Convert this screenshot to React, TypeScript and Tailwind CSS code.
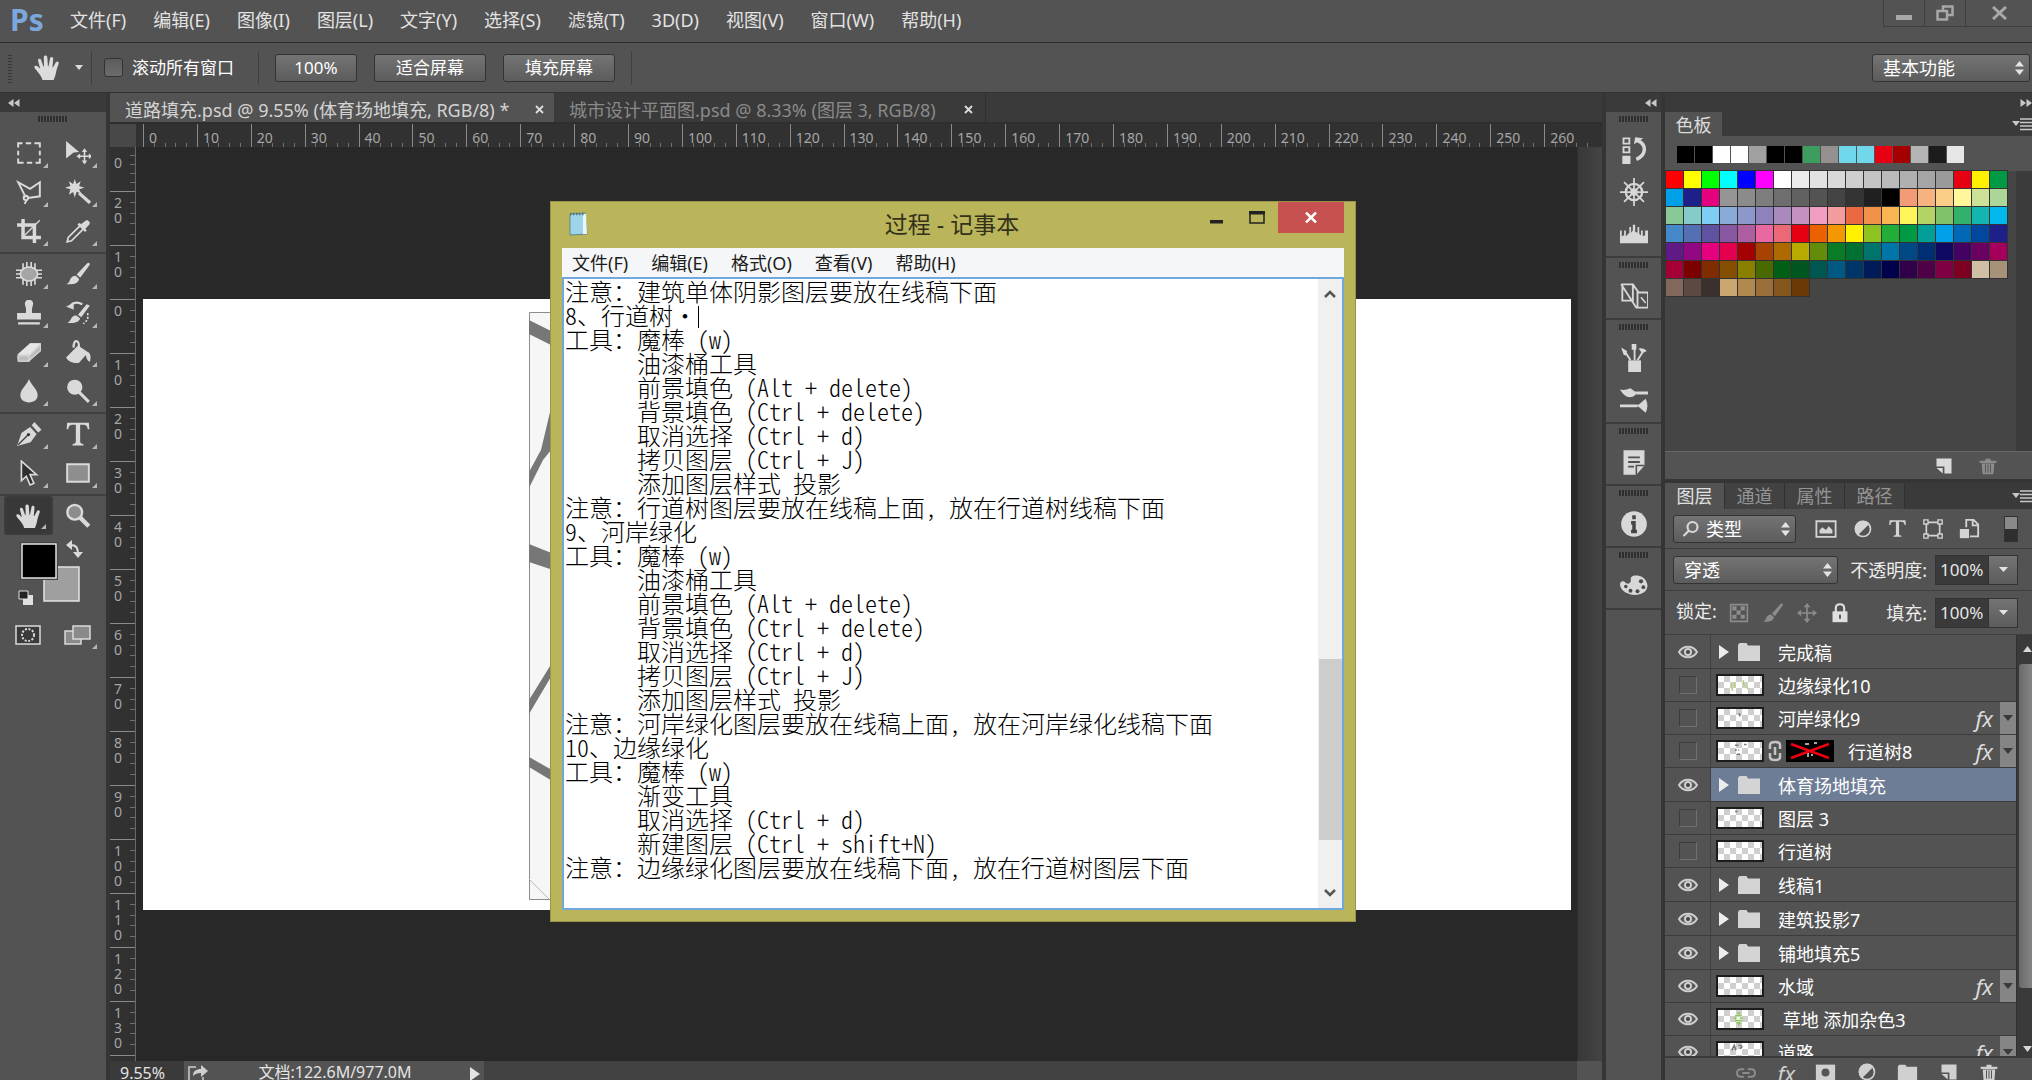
import type { ReactNode } from 'react';

const menus = ['文件(F)', '编辑(E)', '图像(I)', '图层(L)', '文字(Y)', '选择(S)', '滤镜(T)', '3D(D)', '视图(V)', '窗口(W)', '帮助(H)'];
const noteMenus = ['文件(F)', '编辑(E)', '格式(O)', '查看(V)', '帮助(H)'];

const noteText = `注意：建筑单体阴影图层要放在线稿下面
8、行道树·
工具：魔棒 (w)
      油漆桶工具
      前景填色 (Alt + delete)
      背景填色 (Ctrl + delete)
      取消选择 (Ctrl + d)
      拷贝图层 (Ctrl + J)
      添加图层样式 投影
注意：行道树图层要放在线稿上面， 放在行道树线稿下面
9、河岸绿化
工具：魔棒 (w)
      油漆桶工具
      前景填色 (Alt + delete)
      背景填色 (Ctrl + delete)
      取消选择 (Ctrl + d)
      拷贝图层 (Ctrl + J)
      添加图层样式 投影
注意：河岸绿化图层要放在线稿上面， 放在河岸绿化线稿下面
10、边缘绿化
工具：魔棒 (w)
      渐变工具
      取消选择 (Ctrl + d)
      新建图层 (Ctrl + shift+N)
注意：边缘绿化图层要放在线稿下面， 放在行道树图层下面`;

const recent = '000000 000000 ffffff ffffff a0a0a0 000000 000000 3d9d5f 949090 71d7ea 71d7ea e60012 a40000 b4b4b4 1c1c1c e6e6e6'.split(' ');
const swatches = [
  'ff0000 ffff00 00ff00 00ffff 0000ff ff00ff ffffff ececec e2e2e2 d9d9d9 cfcfcf c4c4c4 bababa b0b0b0 a5a5a5 9a9a9a e60012 fff100 009944',
  '00a0e9 1d2088 e4007f 959595 8b8b8b 7d7d7d 6e6e6e 616161 535353 444444 343434 221f20 000000 f29b76 f6b37f facd89 fff799 cce198 acd598',
  '89c997 84ccc9 7ecef4 88abda 8c97cb 8f82bc aa89bd c490bf f19ec2 f29c9f eb6941 f19149 f8b551 fff45c b3d465 80c269 32b16c 13b5b1 00b7ee',
  '448aca 556fb5 5f52a0 8957a1 ae5da1 ea68a2 eb6877 e60012 eb6100 f39800 fff100 8fc31f 22ac38 009944 009e96 00a0e9 0068b7 00479d 1d2088',
  '601986 920783 e4007f e5004f a40000 a84200 ac6a00 b7aa00 638c0b 097c25 007130 00736d 0075a9 004986 002e73 100964 440062 6a005f a4005b',
  'a40035 7d0000 7f2d00 834e00 8a8000 486a00 005e15 00561f 005752 005982 003567 001c58 00004c 30004a 500047 7e0043 7d0022 cfc0a5 a69279',
  '81685a 5c4a42 3a302b c9a66f b18850 9c6f3a 85561e 6a3906',
].join(' ').split(' ');

type Layer = { name: string; kind: 'group' | 'layer'; on: boolean; fx?: boolean; mask?: boolean; active?: boolean; spots?: string; spotColor?: string };

const layers: Layer[] = [
  { name: '完成稿', kind: 'group', on: true },
  { name: '边缘绿化10', kind: 'layer', on: false, spots: 'M13 10l2 8M17 8l1 6M28 5l1 8M31 12l3 4', spotColor: '#b5d47a' },
  { name: '河岸绿化9', kind: 'layer', on: false, fx: true, spots: 'M23 5l1 4' },
  { name: '行道树8', kind: 'layer', on: false, fx: true, mask: true, spots: 'M18 4h4M29 3h3M18 10h2M22 10h1M20 15h4' },
  { name: '体育场地填充', kind: 'group', on: true, active: true },
  { name: '图层 3', kind: 'layer', on: false, spots: 'M18 3h3' },
  { name: '行道树', kind: 'layer', on: false },
  { name: '线稿1', kind: 'group', on: true },
  { name: '建筑投影7', kind: 'group', on: true },
  { name: '铺地填充5', kind: 'group', on: true },
  { name: '水域', kind: 'layer', on: true, fx: true },
  { name: ' 草地 添加杂色3', kind: 'layer', on: true, spots: 'M21 3l3 2M18 7h8M17 10h3M24 10h3M18 13h9M20 16h5M22 18h2', spotColor: '#8cc65c' },
  { name: '道路', kind: 'layer', on: true, fx: true, spots: 'M14 9l3-6 2 6M22 3h4M24 7l3-3' },
];

function Icon({ children, size = 26, label }: { children: ReactNode; size?: number; label?: string }) {
  return (
    <svg width={size} height={size} viewBox="0 0 24 24" fill="none" stroke="currentColor" strokeWidth="2" aria-label={label} className="shrink-0">
      {children}
    </svg>
  );
}

const Hand = () => (
  <path
    stroke="none"
    fill="currentColor"
    d="M7.500 23c-.5-2.500-2.500-5-4.500-7.500-1-1.500-2.500-2.500-2.700-4 .4-1.500 2.300-1.200 3.500 0l1.700 1.600L3.600 6c-.2-2 2.200-2.300 2.800-.5l2 5.500h.5L8.700 2.800c.1-2 2.900-2 3.100 0l.6 8h.5l1.400-7c.4-1.900 2.900-1.500 2.800.5l-.7 7.500.5.200 2.500-4.600c1-1.600 3.100-.6 2.500 1.200-1 3-1.900 5.200-2.400 8-.4 2.600-1.200 4-2 6.400z"
  />
);
const Brush = () => (
  <g stroke="none" fill="currentColor">
    <path d="M22 1.500c1.200.6 1 1.800.4 2.700L14 15.500 10.800 12.500 20.500 2z" />
    <path d="M10 13.500l3 3c-.6 3.500-4 5.500-12 5 2.500-1 2.800-2 3.500-4 .9-2.600 3-4 5.500-4z" />
  </g>
);
const Folder = () => <path stroke="none" fill="currentColor" d="M1 5l1.500-2h7L11 5.500h12V21H1z" />;
const NewPage = () => <path stroke="none" fill="currentColor" d="M3 3h18v18H12.500V12.500H3zM3 14.500h7.500V21z" />;
const Trash = () => (
  <g>
    <path d="M2 7h20M9 4.500h6" strokeWidth="2.500" />
    <path d="M4.500 9l1 13h13l1-13z" fill="currentColor" stroke="none" />
    <path d="M9 10v10M12 10v10M15 10v10" stroke="#555" strokeWidth="1.200" />
  </g>
);
const HalfDisc = () => (
  <g>
    <circle cx="12" cy="12" r="9" />
    <path d="M18.400 5.600A9 9 0 0 0 5.600 18.400z" fill="currentColor" />
  </g>
);
const MoveCross = () => (
  <g>
    <path d="M12 3v18M3 12h18" />
    <path d="M12 0l4 5H8zM12 24l4-5H8zM0 12l5-4v8zM24 12l-5-4v8z" fill="currentColor" stroke="none" />
  </g>
);

const toolGroups: { label: string; icon: ReactNode; flyout?: boolean; active?: boolean }[][] = [
  [
    { label: '矩形选框', flyout: true, icon: <path d="M2 7V3h4M9 3h5M17 3h5v4M22 10v4M22 17v4h-4M15 21h-5M7 21H2v-4M2 14v-4" strokeWidth="1.800" /> },
    { label: '移动', flyout: true, icon: <g><path d="M1 1l12 10-5 .5L1 17z" fill="currentColor" stroke="none" /><path d="M18 9v12M12 15h12" strokeWidth="1.500" /><path d="M18 7.500l2.500 3.500h-5zM18 22.500l2.500-3.500h-5zM10.500 15l3.500-2.500v5zM25.500 15l-3.500-2.500v5z" fill="currentColor" stroke="none" /></g> },
    { label: '多边形套索', flyout: true, icon: <path d="M9 17L2 3l11 6 9-6v13l-11 1.500M9 15.500a2 2 0 1 0 .1 4 2 2 0 0 0 0-4M10 19l-2 4" strokeWidth="1.800" /> },
    { label: '魔棒', flyout: true, icon: <g><path d="M9 0l1.500 4.500L14.500 2 13 6.500l5 1.500-5 1.500 2 4-4.200-1.800L9 17l-1.500-5L3.500 14.500 5 9.500 0 8l5-1.500L3.500 2l4 2.500z" fill="currentColor" stroke="none" /><path d="M13 13l10 9" strokeWidth="3" /></g> },
    { label: '裁剪', flyout: true, icon: <g><path d="M6.500 1v17H23M1 6.500h16V23" strokeWidth="3.200" /><path d="M8 16L22 2" strokeWidth="1.200" /></g> },
    { label: '吸管', flyout: true, icon: <g><path d="M14 7l-11 11-1 4 4-1 11-11" strokeWidth="1.600" /><path d="M11.500 6l7 7 1.500-1.500-1.200-1.500L22.500 6c1.500-2-1.500-5-3.500-3.500L15 5.500 13 4.500z" fill="currentColor" stroke="none" /></g> },
  ],
  [
    { label: '修补', flyout: true, icon: <g><ellipse cx="12" cy="12" rx="8" ry="6.500" fill="#a5a5a5" strokeWidth="1.500" /><path d="M6.500 2v6M10 1v5M14 1v5M17.500 2v6M6.500 16v6M10 18v5M14 18v5M17.500 16v6M0 8.500h6M0 12h4M0 15.500h6M18 8.500h6M20 12h4M18 15.500h6" strokeWidth="1.500" /></g> },
    { label: '画笔', flyout: true, icon: <Brush /> },
    { label: '仿制图章', flyout: true, icon: <path d="M8.500 5a3.800 3.800 0 1 1 7 0c-.8 2.500-1 4-.6 7H23v6H1v-6h8.100c.4-3 .2-4.500-.6-7zM2 20.500h20v2H2z" fill="currentColor" stroke="none" /> },
    { label: '历史记录画笔', flyout: true, icon: <g><path d="M20 4l3 1-8 11-3-2.500zM11 14.500l3 2.500c-1 3-5 5-12 4 3-1 3-3 4.500-5 1.200-1.500 3-2 4.500-1.500z" fill="currentColor" stroke="none" /><path d="M5 5c3-3.500 8-3 11-1" /><path d="M1 6l7-3v6z" fill="currentColor" stroke="none" /><path d="M21 12v6l-4 4" strokeDasharray="2 1.500" strokeWidth="1.500" /></g> },
    { label: '橡皮擦', flyout: true, icon: <g><path d="M1 16L13 4h10l-1 7-10 10H2z" fill="#bdbdbd" stroke="none" /><path d="M1 14.500L13 4h10L12.500 14.500z" fill="#e6e6e6" stroke="none" /><path d="M2 15.500h10v5H2zM12.500 15L22.500 5v6L12 20" strokeWidth="1" /></g> },
    { label: '油漆桶', flyout: true, icon: <g><path d="M8 8c-.5-8 5-8 5 0v4" /><path d="M1 17L12 6l9 6c3 1 3 6 2 9-3-1-3-4-4-6l-6 7c-4 1-10-1-12-5z" fill="currentColor" stroke="none" /></g> },
    { label: '模糊', flyout: true, icon: <path d="M12 1c2 6 8 9 8 15 0 4-3.500 6.500-8 6.500S4 20 4 16C4 10 10 7 12 1z" fill="currentColor" stroke="none" /> },
    { label: '减淡', flyout: true, icon: <g><circle cx="9" cy="8.500" r="7" fill="currentColor" stroke="none" /><path d="M13 13l9 9" strokeWidth="2.800" /></g> },
  ],
  [
    { label: '钢笔', flyout: true, icon: <g><path d="M1 23L5 11l8-5.500 6 6.500-5.500 7.500z" fill="currentColor" stroke="none" /><path d="M14.500 4l2.500-3 6.500 7-3 2.500z" fill="currentColor" stroke="none" /><path d="M2 22l9-9" stroke="#444" strokeWidth="1.300" /><circle cx="11.500" cy="12.500" r="1.500" fill="#333" stroke="none" /></g> },
    { label: '横排文字', flyout: true, icon: <path d="M2 1.500h20l.5 6h-1.500c-.5-3-1.500-4-4-4h-3v15.500c0 1.500.8 2 3 2.200V22.500H7v-1.300c2.200-.2 3-.7 3-2.200V3.500H7c-2.500 0-3.500 1-4 4H1.500z" fill="currentColor" stroke="none" /> },
    { label: '路径选择', flyout: true, icon: <path d="M5 1v18l4.500-4 3.500 8 3.500-1.500L13 13.500h6z" fill="#2f2f2f" strokeWidth="1.500" /> },
    { label: '矩形', flyout: true, icon: <path d="M2 4h20v16H2z" fill="#8e8e8e" strokeWidth="1.800" /> },
  ],
  [
    { label: '抓手', flyout: true, active: true, icon: <Hand /> },
    { label: '缩放', icon: <g><circle cx="9" cy="8.500" r="6.800" fill="#8c8c8c" strokeWidth="2.200" /><path d="M14 13.500l8 8" strokeWidth="4" /></g> },
  ],
];

const dockGroups: { label: string; icon: ReactNode }[][] = [
  [
    { label: '历史记录', icon: <g><path d="M3 2h5v4.500H3zM3 9.500h5V14H3z" strokeWidth="1.600" /><path d="M2 17h7v7H2zM12 7l1-6 7 1z" fill="currentColor" stroke="none" /><path d="M15 4c8 3 8 12-1 16" strokeWidth="3" /></g> },
    { label: '导航器', icon: <g><circle cx="12" cy="12" r="7" /><circle cx="12" cy="12" r="2.500" strokeWidth="1.500" /><path d="M12 0v24M0 12h24M3.500 3.500l17 17M20.500 3.500l-17 17" strokeWidth="1.500" /></g> },
    { label: '直方图', icon: <path d="M0 20V9h1.500v5l2-1V9h1.500v5l3-3V6h1.500v5l1.500-2V4h2v6l2 1V6h1.500v6l1.500 1V9h1.500v5l2-1V9H24v11z" fill="currentColor" stroke="none" /> },
  ],
  [{ label: '工具预设', icon: <g><path d="M1 2h10v14H2V3M1 2l13 20h10V9h-9v13M11 2l5 7" strokeWidth="1.600" /><path d="M18 13l4 5" strokeWidth="1.300" /></g> }],
  [
    { label: '画笔预设', icon: <g><path d="M7 14h11v10H7z" fill="currentColor" stroke="none" /><path d="M9 14L4 6M12.500 14V4M15 14l5-8" strokeWidth="1.600" /><path d="M1 3l5 3-1 4-2-1zM10 0h4v5h-4zM16 4c3-1 5 0 7 2l-4 2z" fill="currentColor" stroke="none" /></g> },
    { label: '画笔', icon: <g><path d="M10 6h14M0 17h15" strokeWidth="2.500" /><path d="M0 3c3 1 6 0 9-1l4 3v3c-4 3-9 2-13-5zM14 17c3-1 5-4 8-6 2 4 2 8 0 12-3-2-5-5-8-6z" fill="currentColor" stroke="none" /></g> },
  ],
  [{ label: '注释', icon: <g><path d="M3 2h18v13l-7 8H3z" fill="currentColor" stroke="none" /><path d="M7 8h10M7 12h10M7 16h5" stroke="#505050" strokeWidth="1.600" /><path d="M21 15h-7v8" stroke="#505050" strokeWidth="1.300" /></g> }],
  [{ label: '信息', icon: <g><circle cx="12" cy="12" r="11" fill="currentColor" stroke="none" /><path d="M12 4.500v3.500M9.500 11h2.500v8M9.500 18.500h5" stroke="#454545" strokeWidth="3" /></g> }],
  [{ label: '颜色', icon: <g><path d="M10 4c2-2 12-2 13.500 7 .5 7-8 10-15 8C0 17-2 9 2 8c3 0 2 2 5 2 4-1 1-4 3-6z" fill="currentColor" stroke="none" /><g fill="#4a4a4a" stroke="none"><circle cx="18" cy="8" r="1.800" /><circle cx="20" cy="13" r="1.600" /><circle cx="15" cy="16.500" r="1.700" /><circle cx="9" cy="16" r="1.700" /><circle cx="5" cy="12.500" r="1.500" /></g></g> }],
];

const Grip = () => (
  <div className="mx-auto h-[6px] w-[30px] bg-[repeating-linear-gradient(90deg,#2f2f2f_0_2px,#555_2px_3px)]" />
);

const Chevrons = ({ flip = false }: { flip?: boolean }) => (
  <svg width="12" height="8" viewBox="0 0 12 8" fill="#c8c8c8" className={flip ? 'rotate-180' : ''}>
    <path d="M5.500 0v8L0 4zM11.500 0v8L6 4z" />
  </svg>
);

const PanelMenu = () => (
  <button aria-label="面板菜单" className="ml-auto">
    <svg width="20" height="14" viewBox="0 0 20 14">
      <path d="M0 4h8L4 9z" fill="#c8c8c8" />
      <path d="M8 2h12M8 5.500h12M8 9h12M8 12.500h12" stroke="#c8c8c8" strokeWidth="1.500" />
    </svg>
  </button>
);

function Picker({ label, value, className, lens }: { label: string; value: string; className: string; lens?: boolean }) {
  return (
    <div className={`relative h-7 ${className}`}>
      <select
        aria-label={label}
        className={`size-full appearance-none rounded-[3px] border border-[#333] bg-linear-to-b from-[#747474] to-[#5c5c5c] text-lg leading-none text-white ${lens ? 'pl-8' : 'pl-[10px]'}`}
      >
        <option>{value}</option>
      </select>
      {lens && (
        <svg width="18" height="18" viewBox="0 0 18 18" fill="none" stroke="#d8d8d8" strokeWidth="2.200" className="pointer-events-none absolute top-[5px] left-[9px]">
          <circle cx="10.500" cy="7" r="5" />
          <path d="M7 10.500L1.500 16" />
        </svg>
      )}
      <svg width="9" height="14" viewBox="0 0 9 14" fill="#e4e4e4" className="pointer-events-none absolute top-[7px] right-[6px]">
        <path d="M4.500 0L9 5.500H0zM4.500 14L9 8.500H0z" />
      </svg>
    </div>
  );
}

function Percent({ id, label }: { id: string; label: string }) {
  return (
    <div className="ml-auto flex h-[30px] items-center">
      <label htmlFor={id} className="pr-2 text-lg leading-none">{label}</label>
      <input id={id} defaultValue="100%" className="h-full w-[54px] border border-[#333] bg-[#3a3a3a] pl-1 text-[17px] text-[#e6e6e6]" />
      <button aria-label={`${label}滑块`} className="flex h-full w-[29px] items-center justify-center border border-l-0 border-[#333] bg-linear-to-b from-[#747474] to-[#5c5c5c]">
        <svg width="9" height="5" viewBox="0 0 9 5" fill="#e4e4e4"><path d="M0 0h9L4.500 5z" /></svg>
      </button>
    </div>
  );
}

function WindowTitle() {
  return (
    <header className="flex h-[43px] shrink-0 items-start border-b border-[#2c2c2c] bg-[#535353]">
      <div className="flex h-10 w-[70px] items-center pl-[10px] text-[30px] leading-none font-bold text-[#7ba7dc]">Ps</div>
      <nav className="flex h-10 items-center gap-[27px] text-lg leading-none text-[#e2e2e2]">
        {menus.map((m) => (
          <button key={m}>{m}</button>
        ))}
      </nav>
      <div className="ml-auto flex h-[27px] border-b border-l border-[#3f3f3f] text-[#a8a8a8]">
        <button aria-label="最小化" className="flex w-[41px] items-center justify-center border-r border-[#3f3f3f]">
          <svg width="16" height="14" viewBox="0 0 16 14" fill="currentColor"><path d="M0 9h16v5H0z" /></svg>
        </button>
        <button aria-label="还原" className="flex w-[41px] items-center justify-center border-r border-[#3f3f3f]">
          <svg width="18" height="16" viewBox="0 0 18 16" fill="none" stroke="currentColor" strokeWidth="2.500"><path d="M7 5V1.500h9.500V10H12M1.500 6H11v8.500H1.500z" /></svg>
        </button>
        <button aria-label="关闭" className="flex w-[66px] items-center justify-center">
          <svg width="15" height="14" viewBox="0 0 15 14" stroke="currentColor" strokeWidth="3"><path d="M1 1l13 12M14 1L1 13" /></svg>
        </button>
      </div>
    </header>
  );
}

const Divider = () => <div className="h-[34px] w-px bg-[#404040]" />;

function OptionsBar() {
  const btn = 'h-7 rounded-[3px] border border-[#333] bg-linear-to-b from-[#747474] to-[#5c5c5c] leading-none text-white';
  return (
    <div className="flex h-[50px] shrink-0 items-center border-b border-[#333] bg-[#535353] pr-[2px]">
      <div className="ml-2 h-[30px] w-1 bg-[repeating-linear-gradient(0deg,#363636_0_1px,#535353_1px_3px)]" />
      <button aria-label="抓手工具" className="ml-[22px] flex items-center gap-[14px] text-[#dcdcdc]">
        <Icon size={27}><Hand /></Icon>
        <svg width="8" height="5" viewBox="0 0 8 5" fill="currentColor"><path d="M0 0h8L4 5z" /></svg>
      </button>
      <div className="w-2" />
      <Divider />
      <label className="ml-3 flex items-center gap-[9px] text-[17px] leading-none text-white">
        <input type="checkbox" className="size-[19px] appearance-none rounded-[3px] border border-[#333] bg-linear-to-b from-[#5c5c5c] to-[#6c6c6c]" />
        滚动所有窗口
      </label>
      <div className="w-6" />
      <Divider />
      <div className="flex gap-[17px] px-4">
        <button className={`${btn} w-[82px] text-[17px]`}>100%</button>
        <button className={`${btn} w-[112px] text-[17px]`}>适合屏幕</button>
        <button className={`${btn} w-[112px] text-[17px]`}>填充屏幕</button>
      </div>
      <Divider />
      <Picker label="工作区" value="基本功能" className="ml-auto w-[158px]" />
    </div>
  );
}

function Toolbar() {
  return (
    <aside className="flex w-[110px] shrink-0 flex-col border-r-4 border-[#353535] bg-[#535353] text-[#dadada]">
      <div className="flex h-[19px] shrink-0 items-center bg-[#3a3a3a] pl-2"><Chevrons /></div>
      <div className="h-[21px] shrink-0 pt-1"><Grip /></div>
      {toolGroups.map((group, i) => (
        <div key={i} className={`grid shrink-0 grid-cols-2 px-1 ${i > 0 ? 'mt-[2px] border-t-2 border-[#404040]' : ''}`}>
          {group.map((t) => (
            <button key={t.label} aria-label={t.label} className={`relative flex h-[39px] items-center justify-center ${t.active ? 'rounded-[3px] border-2 border-[#3c3c3c] bg-[#383838]' : ''}`}>
              <Icon>{t.icon}</Icon>
              {t.flyout && <span className="absolute right-[5px] bottom-1 size-[5px] bg-[#b8b8b8] [clip-path:polygon(100%_0,100%_100%,0_100%)]" />}
            </button>
          ))}
        </div>
      ))}
      <svg width="106" height="120" viewBox="0 0 106 120" fill="none" className="shrink-0" aria-label="前景色和背景色">
        <path d="M70 10c6 0 8 2 8 10" stroke="#dadada" strokeWidth="2" />
        <path d="M66 10l6-5v10zM78 23l-5-6h10z" fill="#dadada" />
        <path d="M44 32h35v34H44z" fill="#9f9f9f" stroke="#e4e4e4" strokeWidth="1.500" />
        <path d="M20 7h38v38H20z" fill="#444" />
        <path d="M22 9h34v34H22z" fill="#000" stroke="#e4e4e4" strokeWidth="1.500" />
        <path d="M23 60h10v10H23z" fill="#e0e0e0" />
        <path d="M19 56h9v8h-9z" fill="#222" stroke="#e0e0e0" />
        <path d="M16 91h24v18H16z" fill="#3a3a3a" stroke="#dadada" strokeWidth="1.500" />
        <circle cx="28" cy="100" r="6" stroke="#dadada" strokeWidth="2" strokeDasharray="2 1.500" />
        <path d="M65 96h16v13H65z" fill="#8a8a8a" stroke="#dadada" strokeWidth="1.500" />
        <path d="M73 91h17v13H73z" fill="#8a8a8a" stroke="#dadada" strokeWidth="1.500" />
        <path d="M97 109v5h-5z" fill="#b8b8b8" />
      </svg>
    </aside>
  );
}

const tops = Array.from({ length: 27 }, (_, i) => i * 10);
const sides = ['20', '10', '0', '10', '20', '30', '40', '50', '60', '70', '80', '90', '100', '110', '120', '130'];

const SideTicks = () => (
  <div className="flex w-[5px] flex-col justify-evenly">
    {[1, 2, 3, 4].map((t) => <i key={t} className="h-px bg-[#6e6e6e]" />)}
  </div>
);

function Canvas() {
  return (
    <main className="flex min-w-0 flex-1 flex-col bg-[#3a3a3a]">
      <div className="flex h-[31px] shrink-0 border-b-2 border-[#2e2e2e] text-lg leading-none" role="tablist">
        <button role="tab" aria-selected="true" className="flex w-[444px] items-center justify-between bg-[#535353] pt-1 pr-[10px] pl-[15px] text-[#d4d4d4]">
          <span className="whitespace-nowrap">道路填充.psd @ 9.55% (体育场地填充, RGB/8) *</span>
          <svg width="9" height="9" viewBox="0 0 9 9" stroke="#ddd" strokeWidth="1.800"><path d="M1 1l7 7M8 1L1 8" /></svg>
        </button>
        <button role="tab" className="flex w-[432px] items-center justify-between border-r border-[#2e2e2e] pt-1 pr-[12px] pl-[15px] text-[#8a8a8a]">
          <span className="whitespace-nowrap">城市设计平面图.psd @ 8.33% (图层 3, RGB/8)</span>
          <svg width="9" height="9" viewBox="0 0 9 9" stroke="#ddd" strokeWidth="1.800"><path d="M1 1l7 7M8 1L1 8" /></svg>
        </button>
      </div>
      <div className="flex h-[23px] shrink-0 bg-[#313131] text-[#a6a6a6]">
        <div className="w-[26px] shrink-0 bg-[#484848]" />
        <div className="ml-[7px] mr-1 flex flex-1">
          {tops.map((n) => (
            <div key={n} className="grid flex-1 border-l border-[#8a8a8a]">
              <span className="col-start-1 row-start-1 pt-[5px] pl-[5px] text-sm leading-[18px]">{n}</span>
              <div className="col-start-1 row-start-1 flex h-1 justify-evenly self-end">
                {[1, 2, 3, 4].map((t) => <i key={t} className="w-px bg-[#6e6e6e]" />)}
              </div>
            </div>
          ))}
        </div>
      </div>
      <div className="flex min-h-0 flex-1">
        <div className="w-[26px] shrink-0 overflow-hidden border-r border-[#6a6a6a] bg-[#313131] text-[#a6a6a6]">
          <div className="flex h-11 justify-between">
            <span className="w-4 pt-2 text-center text-sm leading-[15px]">0</span>
            <SideTicks />
          </div>
          {sides.map((n, i) => (
            <div key={i} className="flex h-[54px] justify-between border-t border-[#8a8a8a]">
              <div className="flex w-4 flex-col items-center pt-[3px] text-sm leading-[15px]">
                {n.split('').map((d, k) => <span key={k}>{d}</span>)}
              </div>
              <SideTicks />
            </div>
          ))}
          <div className="h-2 border-t border-[#8a8a8a]" />
        </div>
        <div className="min-w-0 flex-1 bg-[#282828] pt-[152px] pr-[6px] pl-[7px]">
          <div className="h-[611px] bg-white pt-[13px] pl-[386px]">
            <svg width="300" height="588" viewBox="0 0 300 588" aria-label="平面图">
              <path d="M.5.500H299V587.500H.5z" fill="#f6f6f6" stroke="#8c8c8c" />
              <path d="M0 8l30 15v14L0 22zM0 160l12-22 10-42v42l-8 10L0 176zM0 232l30 12v16L0 250zM0 388l26-42v12L0 402zM0 445l30 17v11L0 455z" fill="#777" />
              <path d="M0 567l20 20" stroke="#bbb" />
            </svg>
          </div>
        </div>
        <div className="w-[25px] shrink-0 border-l border-[#303030] bg-linear-to-r from-[#383838] to-[#444]" />
      </div>
      <footer className="flex h-[19px] shrink-0 bg-[#414141] text-base leading-[22px] text-[#e4e4e4]">
        <input aria-label="缩放比例" defaultValue="9.55%" className="w-[74px] bg-[#3a3a3a] pt-1 pl-[10px] leading-none" />
        <div className="flex w-[300px] items-start bg-[#535353] pl-1">
          <svg width="20" height="18" viewBox="0 0 20 18" className="mt-[3px]"><path d="M8 3H1v14h14v-4" fill="none" stroke="#cfcfcf" strokeWidth="1.500" /><path d="M5 12c0-5 3-7 8-7V1l7 6-7 6V9c-4 0-6 1-8 3z" fill="#cfcfcf" /></svg>
          <span className="flex-1 pr-2 text-center">文档:122.6M/977.0M</span>
          <svg width="10" height="14" viewBox="0 0 10 14" fill="#e4e4e4" className="mt-[6px] mr-1"><path d="M0 0l10 7-10 7z" /></svg>
        </div>
        <div className="ml-auto w-[25px] bg-[#535353]" />
      </footer>
    </main>
  );
}

function Dock() {
  return (
    <aside className="flex w-[63px] shrink-0 flex-col border-r-4 border-l-4 border-[#353535] bg-[#535353] text-[#d8d8d8]">
      <div className="flex h-[19px] shrink-0 items-center justify-end bg-[#3a3a3a] pr-1"><Chevrons /></div>
      {dockGroups.map((g, i) => (
        <div key={i} className="flex flex-col items-center gap-[14px] border-b-2 border-[#3c3c3c] pt-1 pb-2">
          <Grip />
          {g.map((d) => (
            <button key={d.label} aria-label={d.label}><Icon size={28}>{d.icon}</Icon></button>
          ))}
        </div>
      ))}
    </aside>
  );
}

function SwatchPanel() {
  return (
    <section className="shrink-0">
      <div className="flex h-6 items-center bg-[#3a3a3a]">
        <h2 className="flex h-full w-[57px] items-center justify-center bg-[#535353] pt-[2px] text-lg leading-none text-[#dcdcdc]">色板</h2>
        <PanelMenu />
      </div>
      <div className="flex gap-px pt-[10px] pb-2 pl-3">
        {recent.map((c, i) => (
          <button key={i} aria-label={`#${c}`} className="size-[17px]" style={{ backgroundColor: `#${c}` }} />
        ))}
      </div>
      <div className="flex h-[280px] bg-[#454545]">
        <div className="grid w-[342px] auto-rows-[17px] grid-cols-[repeat(19,17px)] content-start gap-px pl-px">
          {swatches.map((c, i) => (
            <button key={i} aria-label={`#${c}`} className="shadow-[0_0_0_1px_#333]" style={{ backgroundColor: `#${c}` }} />
          ))}
        </div>
        <div className="ml-auto w-4 bg-[#3b3b3b]" />
      </div>
      <div className="flex h-7 items-center justify-end gap-6 border-t border-[#666] pr-[34px]">
        <button aria-label="新建色板" className="text-[#dadada]"><Icon size={20}><NewPage /></Icon></button>
        <button aria-label="删除色板" className="text-[#8c8c8c]"><Icon size={20}><Trash /></Icon></button>
      </div>
    </section>
  );
}

const checker = 'bg-[repeating-conic-gradient(#cfcfcf_0_25%,#fff_0_50%)] bg-[length:12px_12px]';

function LayerRow({ layer }: { layer: Layer }) {
  const group = layer.kind === 'group';
  return (
    <li className={`flex shrink-0 border-b border-[#3c3c3c] ${group ? 'h-[34px]' : 'h-[33px]'}`}>
      <button aria-label={`${layer.name}可见性`} className="flex w-[46px] shrink-0 items-center justify-center border-r border-[#404040]">
        {layer.on ? (
          <svg width="20" height="14" viewBox="0 0 20 14">
            <path d="M1 7c4-7 14-7 18 0-4 7-14 7-18 0z" fill="#5a5a5a" stroke="#cfcfcf" strokeWidth="2" />
            <circle cx="10" cy="7" r="4" fill="#cfcfcf" />
            <circle cx="10" cy="7" r="2" fill="#444" />
          </svg>
        ) : (
          <span className="size-[18px] border border-t-[#3c3c3c] border-r-[#707070] border-b-[#707070] border-l-[#3c3c3c]" />
        )}
      </button>
      <div className={`flex min-w-0 flex-1 items-center ${layer.active ? 'bg-[#6d7d95]' : ''}`}>
        {group ? (
          <div className="flex w-[67px] items-center gap-2 pl-2 text-[#d4d4d4]">
            <svg width="10" height="14" viewBox="0 0 10 14" fill="#ececec"><path d="M0 0l10 7-10 7z" /></svg>
            <Icon size={24}><Folder /></Icon>
          </div>
        ) : (
          <div className="flex items-center gap-1 pl-[5px]">
            <svg width="48" height="22" viewBox="0 0 48 22" className={`border-2 border-[#1c1c1c] ${checker}`}>
              {layer.spots && <path d={layer.spots} stroke={layer.spotColor ?? '#777'} strokeWidth="2" fill="none" />}
            </svg>
            {layer.mask && (
              <>
                <svg width="14" height="22" viewBox="0 0 14 22" fill="none" stroke="#c4c4c4" strokeWidth="2.500">
                  <path d="M2 9V5c0-4 10-4 10 0v4M2 13v4c0 4 10 4 10 0v-4M7 7v8" />
                </svg>
                <svg width="48" height="22" viewBox="0 0 48 22" className="bg-black">
                  <path d="M19 4h4M28 3h3M22 13v4M25 15h2" stroke="#ddd" strokeWidth="1.500" />
                  <path d="M5 4l38 14M43 4L5 18" stroke="#f00010" strokeWidth="2.500" />
                </svg>
              </>
            )}
            <span className="w-[10px]" />
          </div>
        )}
        <span className="pt-[2px] text-lg leading-none whitespace-pre text-white">{layer.name}</span>
        {layer.fx && (
          <div className="ml-auto flex h-full items-center gap-[7px]">
            <i className="pb-px text-[22px] leading-none text-[#dcdcdc]">fx</i>
            <button aria-label="展开效果" className="flex h-full w-4 items-center justify-center bg-[#858585]">
              <svg width="10" height="6" viewBox="0 0 10 6" fill="#3a3a3a"><path d="M0 0h10L5 6z" /></svg>
            </button>
          </div>
        )}
      </div>
    </li>
  );
}

function LayersPanel() {
  return (
    <section className="flex min-h-0 flex-1 flex-col border-t-4 border-[#353535]">
      <div className="flex h-[26px] shrink-0 items-center bg-[#3a3a3a] text-lg leading-none text-[#949494]" role="tablist">
        {['图层', '通道', '属性', '路径'].map((t, i) => (
          <button key={t} role="tab" className={`h-full w-[60px] border-r border-[#303030] ${i === 0 ? 'bg-[#535353] text-[#e0e0e0]' : 'bg-[#424242]'}`}>{t}</button>
        ))}
        <PanelMenu />
      </div>
      <div className="flex h-10 shrink-0 items-center border-b border-[#3f3f3f] pr-[14px] pl-2 text-[#d4d4d4]">
        <Picker label="图层类型" value="类型" className="w-[123px]" lens />
        <div className="ml-[19px] flex flex-1 items-center justify-between">
          <button aria-label="像素图层"><Icon size={22}><path d="M1.500 3.500h21v17h-21z" /><path d="M5 17v-4l3-3 4 3 3-4 4 4v4z" fill="currentColor" stroke="none" /></Icon></button>
          <button aria-label="调整图层"><Icon size={20}><HalfDisc /></Icon></button>
          <button aria-label="文字图层"><Icon size={19}>{toolGroups[2][1].icon}</Icon></button>
          <button aria-label="形状图层"><Icon size={20}><path d="M6 4h12M6 20h12M4 6v12M20 6v12" /><path d="M1 1h5v5H1zM18 1h5v5h-5zM1 18h5v5H1zM18 18h5v5h-5z" strokeWidth="1.600" /></Icon></button>
          <button aria-label="智能对象"><Icon size={22}><path d="M9 10V2h8l5 5v13H13M16 2v6h6" /><path d="M2 12h10v10H2z" fill="currentColor" stroke="none" /></Icon></button>
          <button aria-label="过滤开关" className="ml-2 h-[26px] w-[14px] border border-[#333] bg-linear-to-b from-[#8a8a8a] from-50% to-[#2e2e2e] to-50%" />
        </div>
      </div>
      <div className="flex h-[42px] shrink-0 items-center border-b border-[#3f3f3f] pr-[14px] pl-2 text-[#ececec]">
        <Picker label="混合模式" value="穿透" className="w-[165px]" />
        <Percent id="opacity" label="不透明度:" />
      </div>
      <div className="flex h-11 shrink-0 items-center border-b border-[#3f3f3f] pr-[14px] pl-[11px] text-[#ececec]">
        <span className="pr-3 pb-1 text-lg leading-none">锁定:</span>
        <div className="flex items-center gap-[13px] text-[#8c8c8c]">
          <button aria-label="锁定透明像素"><Icon size={20}><path d="M2 2h20v20H2z" /><path d="M4 4h5v5H4zM14 4h5v5h-5zM9 9h5v5H9zM4 14h5v5H4zM14 14h5v5h-5z" fill="currentColor" stroke="none" /></Icon></button>
          <button aria-label="锁定图像像素"><Icon size={22}><Brush /></Icon></button>
          <button aria-label="锁定位置"><Icon size={20}><MoveCross /></Icon></button>
          <button aria-label="锁定全部" className="text-[#e0e0e0]"><Icon size={20}><path d="M7 11V6c0-6 10-6 10 0v5" strokeWidth="2.500" /><path d="M3 10h18v13H3z" fill="currentColor" stroke="none" /><path d="M12 14v5" stroke="#444" /></Icon></button>
        </div>
        <Percent id="fill" label="填充:" />
      </div>
      <div className="flex min-h-0 flex-1 overflow-hidden">
        <ul className="flex min-w-0 flex-1 flex-col">
          {layers.map((l) => <LayerRow key={l.name} layer={l} />)}
        </ul>
        <div className="flex w-4 shrink-0 flex-col items-end border-l border-[#303030] bg-[#3a3a3a] pt-[11px] pb-1">
          <svg width="9" height="6" viewBox="0 0 9 6" fill="#d8d8d8"><path d="M0 6h9L4.500 0z" /></svg>
          <div className="mt-3 h-[324px] w-[13px] rounded-l-[3px] bg-linear-to-r from-[#6a6a6a] to-[#848484]" />
          <svg width="9" height="6" viewBox="0 0 9 6" fill="#d8d8d8" className="mt-auto"><path d="M0 0h9L4.500 6z" /></svg>
        </div>
      </div>
      <div className="flex h-6 shrink-0 items-start justify-between border-t-2 border-[#3a3a3a] pt-1 pr-[33px] pl-[70px] text-[#d0d0d0]">
        <button aria-label="链接图层" className="text-[#8c8c8c]"><Icon size={22}><path d="M10 8H6c-5 0-5 8 0 8h4M14 8h4c5 0 5 8 0 8h-4M8 12h8" strokeWidth="2.200" /></Icon></button>
        <button aria-label="图层样式" className="text-[22px] leading-none italic">fx</button>
        <button aria-label="添加蒙版"><Icon size={21}><path d="M1 3h22v19H1z" fill="currentColor" stroke="none" /><circle cx="12" cy="12" r="4.500" fill="#555" stroke="none" /></Icon></button>
        <button aria-label="调整图层"><Icon size={20}><HalfDisc /></Icon></button>
        <button aria-label="新建组"><Icon size={21}><Folder /></Icon></button>
        <button aria-label="新建图层"><Icon size={20}><NewPage /></Icon></button>
        <button aria-label="删除图层"><Icon size={20}><Trash /></Icon></button>
      </div>
    </section>
  );
}

function Notepad() {
  return (
    <section className="absolute top-[201px] left-[550px] flex h-[721px] w-[806px] flex-col border border-[#98944a] bg-[#bab55a] px-[11px] pb-[11px] text-black">
      <div className="flex h-[46px] shrink-0 items-start">
        <svg width="22" height="26" viewBox="0 0 22 26" className="mt-[9px] ml-[5px]">
          <path d="M3 3l15-1 2 21-17 1z" fill="#9ed4ea" stroke="#5d8793" />
          <path d="M16 3l3 0 1 20-4 0z" fill="#e9f7fb" />
          <path d="M3 3h15" stroke="#55717a" strokeWidth="2.500" strokeDasharray="1.500 1.500" />
        </svg>
        <h1 className="flex h-[45px] flex-1 items-center justify-center pl-[118px] text-[23px] leading-none text-[#33311a]">过程 - 记事本</h1>
        <button aria-label="最小化" className="flex h-[30px] w-[38px] items-center justify-center">
          <svg width="13" height="14" viewBox="0 0 13 14"><path d="M0 10h13v3.500H0z" fill="#222" /></svg>
        </button>
        <button aria-label="最大化" className="flex h-[30px] w-[43px] items-center justify-center">
          <svg width="16" height="13" viewBox="0 0 16 13"><path d="M1 1h14v11H1z" fill="none" stroke="#222" strokeWidth="1.500" /><path d="M0 0h16v3.500H0z" fill="#222" /></svg>
        </button>
        <button aria-label="关闭" className="flex h-[31px] w-[66px] items-center justify-center bg-[#c75050]">
          <svg width="12" height="11" viewBox="0 0 12 11" stroke="#fff" strokeWidth="2.500"><path d="M1 .5l10 10M11 .5l-10 10" /></svg>
        </button>
      </div>
      <nav className="flex h-[29px] shrink-0 items-center gap-[23px] bg-[#f5f6f7] pl-[10px] text-lg leading-none text-[#1c1c1c]">
        {noteMenus.map((m) => <button key={m}>{m}</button>)}
      </nav>
      <div className="relative flex min-h-0 flex-1 border-2 border-[#6fa8dc] bg-white">
        <textarea
          aria-label="记事本内容"
          defaultValue={noteText}
          spellCheck={false}
          wrap="off"
          className="flex-1 resize-none overflow-hidden pl-px text-2xl leading-6 font-light outline-none [font-family:'Noto_Sans_CJK_SC',monospace] [font-feature-settings:'hwid']"
        />
        <span className="absolute top-[27px] left-[134px] h-[22px] w-px bg-black" />
        <div className="flex w-6 flex-col items-center bg-[#f0f0f0] py-[10px]">
          <svg width="12" height="10" viewBox="0 0 12 10" fill="none" stroke="#555" strokeWidth="2.500"><path d="M1 8l5-5 5 5" /></svg>
          <div className="mt-[360px] h-[181px] w-[23px] bg-[#cdcdcd]" />
          <svg width="12" height="10" viewBox="0 0 12 10" fill="none" stroke="#555" strokeWidth="2.500" className="mt-auto"><path d="M1 2l5 5 5-5" /></svg>
        </div>
      </div>
    </section>
  );
}

export default function App() {
  return (
    <div className="relative flex h-screen flex-col overflow-hidden bg-[#535353] [font-family:'Noto_Sans','Noto_Sans_CJK_SC',sans-serif]">
      <WindowTitle />
      <OptionsBar />
      <div className="flex min-h-0 flex-1">
        <Toolbar />
        <Canvas />
        <Dock />
        <div className="flex w-[367px] shrink-0 flex-col">
          <div className="flex h-[19px] shrink-0 items-center justify-end bg-[#3a3a3a]"><Chevrons flip /></div>
          <SwatchPanel />
          <LayersPanel />
        </div>
      </div>
      <Notepad />
    </div>
  );
}
